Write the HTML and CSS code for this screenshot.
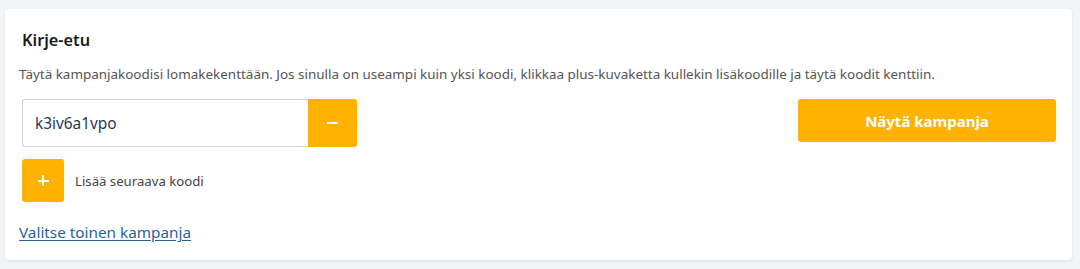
FILE: index.html
```html
<!DOCTYPE html>
<html lang="fi">
<head>
<meta charset="utf-8">
<link rel="stylesheet" href="styles.css">
</head>
<body>
<div class="card">
  <h2 class="title">Kirje-etu</h2>
  <p class="desc">Täytä kampanjakoodisi lomakekenttään. Jos sinulla on useampi kuin yksi koodi, klikkaa plus-kuvaketta kullekin lisäkoodille ja täytä koodit kenttiin.</p>
  <div class="row">
    <div class="codes">
      <div class="code-group">
        <div class="code-input">k3iv6a1vpo</div>
        <button class="sq-btn minus" aria-label="Poista"><span class="bar"></span></button>
      </div>
      <div class="add-row">
        <button class="sq-btn plus" aria-label="Lisää"><span class="bar"></span><span class="bar v"></span></button>
        <span class="add-label">Lisää seuraava koodi</span>
      </div>
    </div>
    <button class="show-btn">Näytä kampanja</button>
  </div>
  <a class="link" href="#">Valitse toinen kampanja</a>
</div>
</body>
</html>
```
FILE: styles.css
```css
html, body {
  margin: 0;
  padding: 0;
}
body {
  background: #f3f4f6;
  font-family: "Noto Sans", "Open Sans", sans-serif;
  width: 1080px;
  height: 269px;
  padding: 9px 8px 0 5px;
  box-sizing: border-box;
}
.card {
  background: #fff;
  border-radius: 4px;
  box-shadow: 0 1px 3px rgba(0,0,0,0.08);
  height: 251px;
  box-sizing: border-box;
  padding: 20px 16px 0 17px;
}
.title {
  margin: 0;
  font-size: 16.3px;
  font-weight: 600;
  color: #1a1a1a;
  line-height: 22px;
}
.desc {
  margin: 14px 0 0 -3px;
  font-size: 13.45px;
  color: #555;
  line-height: 18px;
}
.row {
  display: flex;
  justify-content: space-between;
  align-items: flex-start;
  margin-top: 16px;
}
.codes {
  display: flex;
  flex-direction: column;
  gap: 12px;
}
.code-group {
  display: flex;
}
.code-input {
  width: 286px;
  height: 48px;
  box-sizing: border-box;
  border: 1px solid #d4d4d4;
  border-right: none;
  border-radius: 3px 0 0 3px;
  padding: 0 12px;
  display: flex;
  align-items: center;
  font-size: 15.4px;
  color: #1d3a52;
}
.sq-btn {
  border: none;
  background: #ffb300;
  padding: 0;
  position: relative;
  display: flex;
  align-items: center;
  justify-content: center;
}
.minus {
  width: 49px;
  height: 48px;
  border-radius: 0 3px 3px 0;
}
.plus {
  width: 42px;
  height: 43px;
  border-radius: 3px;
}
.bar {
  display: block;
  width: 11px;
  height: 2px;
  background: #fff;
}
.bar.v {
  position: absolute;
  width: 2px;
  height: 11px;
  left: 20px;
  top: 16px;
}
.add-row {
  display: flex;
  align-items: center;
  gap: 11px;
}
.add-label {
  font-size: 13.2px;
  color: #444;
  padding-top: 1px;
}
.show-btn {
  width: 258px;
  height: 43px;
  border: none;
  border-radius: 3px;
  background: #ffb300;
  color: #fff;
  font-family: "Noto Sans", "Open Sans", sans-serif;
  font-weight: 700;
  font-size: 15px;
  padding: 0;
}
.link {
  display: inline-block;
  margin-top: 20px;
  margin-left: -3px;
  font-size: 15.3px;
  color: #2a6496;
  text-decoration: underline;
  text-underline-offset: 2px;
}
```
